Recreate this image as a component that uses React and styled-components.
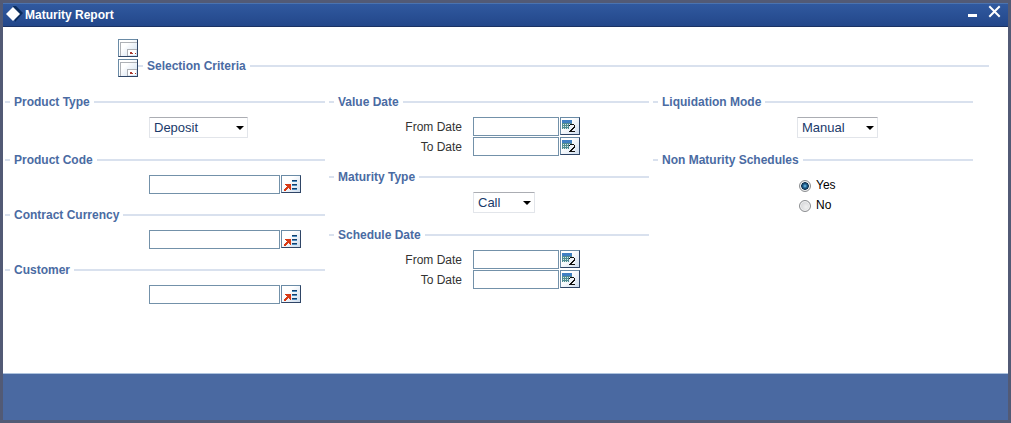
import React, { useState } from "react";
import styled, { createGlobalStyle } from "styled-components";

const GlobalStyle = createGlobalStyle`
  *, *::before, *::after { box-sizing: border-box; }
  body {
    margin: 0;
    font: 12px/16px "Liberation Sans", Arial, sans-serif;
    background: #525a75;
  }
`;

const Window = styled.div`
  display: flex;
  flex-direction: column;
  min-height: 100vh;
  padding: 3px;
  background: #525a75;
`;

const TitleBar = styled.header`
  display: flex;
  align-items: center;
  height: 24px;
  padding: 0 6px 0 2px;
  gap: 2px;
  background: linear-gradient(#30599f, #23478a);
  border-top: 1px solid #4a73b0;
  border-bottom: 1px solid #1b3263;
`;

const Title = styled.h1`
  flex: 1;
  margin: 0;
  font-size: 12px;
  line-height: 16px;
  color: #fff;
`;

const WindowButton = styled.button`
  display: flex;
  align-self: flex-start;
  width: 16px;
  height: 16px;
  margin-left: 4px;
  padding: 0;
  border: 0;
  background: none;
  color: #fff;
`;

const Content = styled.main`
  flex: 1;
  padding: 12px 0;
  background: #fff;
`;

const Criteria = styled.section`
  display: flex;
  align-items: flex-end;
  padding: 0 19px 0 115px;
  margin-bottom: 17px;
`;

const ButtonStack = styled.div`
  display: flex;
  flex-direction: column;
  gap: 2px;
`;

const IconButton = styled.button`
  display: flex;
  flex: none;
  width: 20px;
  height: 18px;
  padding: 0;
  border: 1px solid;
  border-color: #6a8ba6 #2f4566 #2f4566 #6a8ba6;
  background: linear-gradient(135deg, #fff 35%, #cddced);
`;

const CriteriaTitle = styled.h2`
  display: flex;
  flex: 1;
  align-items: center;
  gap: 4px;
  margin: 0;
  padding-bottom: 3px;
  font-size: 12px;
  line-height: 16px;
  color: #4a6ba3;

  &::before, &::after { content: ""; height: 2px; background: #d9e1ee; }
  &::before { width: 5px; }
  &::after { flex: 1; }
`;

const Columns = styled.div`
  display: grid;
  grid-template-columns: repeat(3, minmax(0, 1fr));
  gap: 4px;
  padding: 0 35px 0 2px;
`;

const Group = styled.fieldset`
  min-width: 0;
  margin: 0;
  padding: 0 0 12px;
  border: 0;
`;

const Legend = styled.legend`
  display: flex;
  align-items: center;
  gap: 4px;
  width: 100%;
  margin-bottom: 7px;
  padding: 0;
  font-weight: bold;
  color: #4a6ba3;

  &::before, &::after { content: ""; height: 2px; background: #d9e1ee; }
  &::before { width: 5px; }
  &::after { flex: 1; }
`;

const Row = styled.div`
  display: flex;
  gap: 1px;
  min-height: ${(p) => (p.$tall ? 23 : 20)}px;
  padding-left: ${(p) => (p.$labelled ? 0 : "45%")};
`;

const Label = styled.label`
  width: 45%;
  margin-right: -1px;
  padding: 2px 11px 0 0;
  text-align: right;
  color: #333;
`;

const TextBox = styled.input`
  width: ${(p) => (p.$short ? 86 : 131)}px;
  height: 19px;
  padding: 0 3px;
  border: 1px solid #7391a9;
  border-radius: 0;
  background: #fff;
  font: inherit;
  color: #1a3a6a;
`;

const SelectBox = styled.select`
  appearance: none;
  width: ${(p) => p.$width}px;
  height: 21px;
  padding: 0 16px 0 4px;
  border: 1px solid #e2e5ea;
  border-top-color: #abadb3;
  border-radius: 1px;
  background: #fff;
  font: 13px/16px "Liberation Sans", Arial, sans-serif;
  color: #1a3a6a;
`;

const SelectWrap = styled.div`
  display: flex;
  position: relative;
  height: 21px;

  svg { position: absolute; right: 4px; top: 9px; pointer-events: none; }
`;

const Choice = styled.label`
  display: flex;
  align-items: center;
  gap: 5px;
  padding-left: 2px;
  color: #000;
`;

const Radio = styled.input`
  appearance: none;
  width: 12px;
  height: 12px;
  margin: 2px 0 0;
  border: 1px solid #8b8d90;
  border-radius: 50%;
  background: radial-gradient(circle at 60% 60%, #f0f0f0, #c9cbce);
  box-shadow: inset 0 0 0 1px #f4f4f4;

  &:checked {
    background: radial-gradient(circle, #7cc6ec 0, #24699a 25%, #0e2f4d 50%, #dfe3e6 60%);
  }
`;

const Footer = styled.footer`
  height: 47px;
  border-top: 1px solid #adc2dd;
  background: #4a69a1;
`;

const Logo = () => (
  <svg width="18" height="18" viewBox="0 0 18 18" aria-hidden="true">
    <path d="M8 0h3l7 7-8 9z" fill="#0b2c5c" />
    <path d="M8 1l7 7-7 7-7-7z" fill="#fff" />
  </svg>
);

const FormIcon = () => (
  <svg width="18" height="16" viewBox="0 0 18 16" shapeRendering="crispEdges" aria-hidden="true">
    <path d="M1 15V2h16M8 15V9h9" transform="translate(.5 .5)" fill="none" stroke="#aeb1b6" />
    <path d="M9 10h8v5H9z" fill="#fff" />
    <path d="M11 12h2v1h1v1h-3zM16 13h1v1h-1z" fill="#ad3b32" />
  </svg>
);

const ListIcon = () => (
  <svg width="18" height="16" viewBox="0 0 18 16" shapeRendering="crispEdges" aria-hidden="true">
    <path d="M3 8h6v6H8v-1H7v-1H6v1H5v1H4v1H2v-2h1v-1h1v-1h1v-1H4V9H3z" fill="#d83b16" />
    <path d="M10 4h5v1h-5zM10 8h5v1h-5zM10 12h5v1h-5z" fill="#123f6c" />
    <path d="M10 5h5v1h-5zM10 9h5v1h-5zM10 13h5v1h-5z" fill="#4b8dc2" />
  </svg>
);

const CalendarIcon = () => (
  <svg width="18" height="16" viewBox="0 0 18 16" shapeRendering="crispEdges" aria-hidden="true">
    <path d="M1 2h10v9H1z" fill="#4f8b93" />
    <path d="M1 2h10v3H1z" fill="#3f7fc2" />
    <path d="M2 6h1v1H2zM4 6h1v1H4zM6 6h1v1H6zM8 6h1v1H8zM2 8h1v1H2zM4 8h1v1H4zM6 8h1v1H6zM2 10h1v1H2zM4 10h1v1H4zM6 10h1v1H6z" fill="#d7ebdf" />
    <path d="M8 6h6v8H8z" fill="#edf2f8" />
    <path d="M8 8V7h1V6h4v1h1v3h-1v1h-1v1h-1v1h3v1H8v-1h1v-1h1v-1h1v-1h1v-1h1V7H9v1z" fill="#111" />
  </svg>
);

function Section({ title, children }) {
  return (
    <Group>
      <Legend>{title}</Legend>
      {children}
    </Group>
  );
}

function Lookup({ name }) {
  return (
    <Row>
      <TextBox type="text" aria-label={name} />
      <IconButton type="button" aria-label={`${name} list`}><ListIcon /></IconButton>
    </Row>
  );
}

function DateField({ id, label }) {
  return (
    <Row $labelled>
      <Label htmlFor={id}>{label}</Label>
      <TextBox $short id={id} type="text" />
      <IconButton type="button" aria-label={`${label} calendar`}><CalendarIcon /></IconButton>
    </Row>
  );
}

function Dropdown({ name, options, width }) {
  return (
    <Row $tall>
      <SelectWrap>
        <SelectBox aria-label={name} $width={width}>
          {options.map((o) => <option key={o}>{o}</option>)}
        </SelectBox>
        <svg width="8" height="4" viewBox="0 0 8 4" aria-hidden="true">
          <path d="M0 0h8L4 4z" fill="#000" />
        </svg>
      </SelectWrap>
    </Row>
  );
}

export default function App() {
  const [schedules, setSchedules] = useState("Yes");
  return (
    <>
      <GlobalStyle />
      <Window>
        <TitleBar>
          <Logo />
          <Title>Maturity Report</Title>
          <WindowButton type="button" aria-label="Minimize">
            <svg width="16" height="16" viewBox="0 0 16 16"><path d="M4 10h9v3H4z" fill="currentColor" /></svg>
          </WindowButton>
          <WindowButton type="button" aria-label="Close">
            <svg width="16" height="16" viewBox="0 0 16 16"><path d="M4 3l9 9M13 3L4 12" stroke="currentColor" strokeWidth="2" strokeLinecap="square" /></svg>
          </WindowButton>
        </TitleBar>
        <Content>
          <Criteria>
            <ButtonStack>
              <IconButton type="button" aria-label="Default criteria"><FormIcon /></IconButton>
              <IconButton type="button" aria-label="Edit criteria"><FormIcon /></IconButton>
            </ButtonStack>
            <CriteriaTitle>Selection Criteria</CriteriaTitle>
          </Criteria>
          <Columns>
            <div>
              <Section title="Product Type">
                <Dropdown name="Product Type" options={["Deposit"]} width={99} />
              </Section>
              <Section title="Product Code"><Lookup name="Product Code" /></Section>
              <Section title="Contract Currency"><Lookup name="Contract Currency" /></Section>
              <Section title="Customer"><Lookup name="Customer" /></Section>
            </div>
            <div>
              <Section title="Value Date">
                <DateField id="value-from" label="From Date" />
                <DateField id="value-to" label="To Date" />
              </Section>
              <Section title="Maturity Type">
                <Dropdown name="Maturity Type" options={["Call"]} width={62} />
              </Section>
              <Section title="Schedule Date">
                <DateField id="schedule-from" label="From Date" />
                <DateField id="schedule-to" label="To Date" />
              </Section>
            </div>
            <div>
              <Section title="Liquidation Mode">
                <Dropdown name="Liquidation Mode" options={["Manual"]} width={81} />
              </Section>
              <Section title="Non Maturity Schedules">
                {["Yes", "No"].map((value) => (
                  <Row key={value}>
                    <Choice>
                      <Radio
                        type="radio"
                        name="schedules"
                        checked={schedules === value}
                        onChange={() => setSchedules(value)}
                      />
                      {value}
                    </Choice>
                  </Row>
                ))}
              </Section>
            </div>
          </Columns>
        </Content>
        <Footer />
      </Window>
    </>
  );
}
